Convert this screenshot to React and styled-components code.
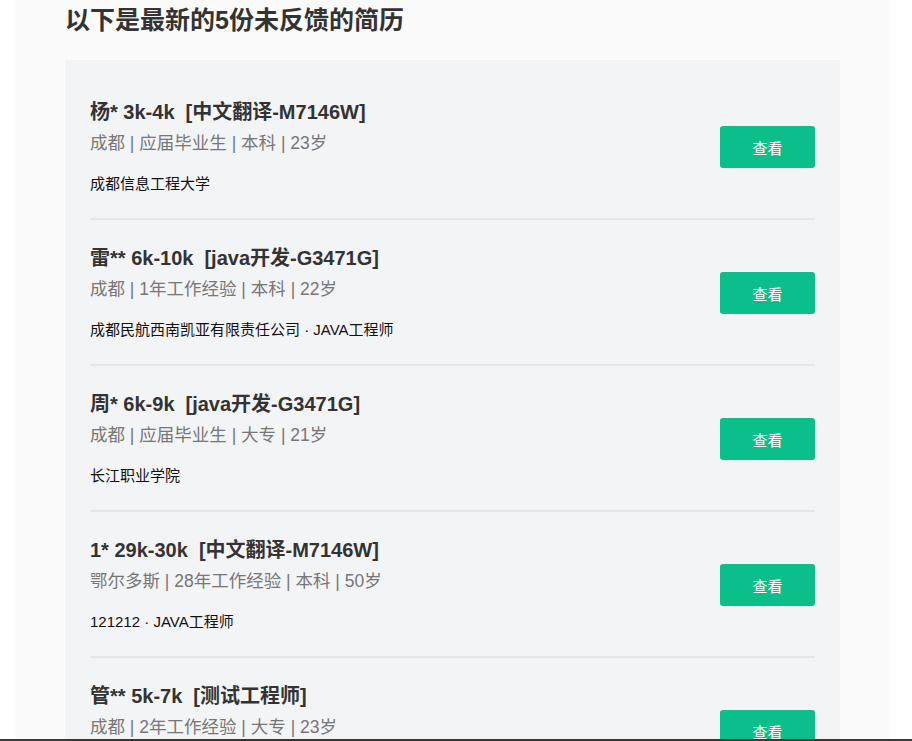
import React from "react";
import styled, { createGlobalStyle } from "styled-components";

const GlobalStyle = createGlobalStyle`
  html, body {
    margin: 0;
    padding: 0;
    background: #fff;
    font-family: "Liberation Sans", Arial, "Noto Sans CJK SC", sans-serif;
  }
`;

const Page = styled.div`
  margin: 0 22px 0 15px;
  padding: 0 50px 40px;
  background: #fbfbfb;
  min-height: 100vh;
`;

const Title = styled.h2`
  margin: 0;
  padding-top: 4px;
  height: 56px;
  line-height: 32px;
  font-size: 25px;
  font-weight: bold;
  color: #333;
`;

const Panel = styled.ul`
  list-style: none;
  margin: 0;
  padding: 14px 25px 0;
  background: #f3f4f6;
`;

const Row = styled.li`
  display: flex;
  align-items: center;
  justify-content: space-between;
  padding: 26px 0 24px;
  border-bottom: 2px solid #e5e6e8;
`;

const Info = styled.div`
  display: flex;
  flex-direction: column;
`;

const Name = styled.div`
  font-size: 20px;
  line-height: 24px;
  font-weight: bold;
  color: #333;
`;

const Job = styled.span`
  margin-left: 11px;
`;

const Meta = styled.div`
  margin-top: 7px;
  font-size: 17.5px;
  line-height: 24px;
  color: #777;
`;

const Detail = styled.div`
  margin-top: 19px;
  font-size: 15px;
  line-height: 20px;
  color: #111;
`;

const ViewButton = styled.button`
  width: 95px;
  height: 42px;
  border: none;
  border-radius: 3px;
  background: #0bbf8a;
  color: #fff;
  font-family: inherit;
  font-size: 15px;
  cursor: pointer;
`;

const BottomBar = styled.div`
  position: fixed;
  left: 0;
  right: 0;
  bottom: 0;
  height: 2px;
  background: #383838;
`;

const resumes = [
  {
    name: "杨*",
    salary: "3k-4k",
    job: "中文翻译-M7146W",
    meta: "成都 | 应届毕业生 | 本科 | 23岁",
    detail: "成都信息工程大学",
  },
  {
    name: "雷**",
    salary: "6k-10k",
    job: "java开发-G3471G",
    meta: "成都 | 1年工作经验 | 本科 | 22岁",
    detail: "成都民航西南凯亚有限责任公司 · JAVA工程师",
  },
  {
    name: "周*",
    salary: "6k-9k",
    job: "java开发-G3471G",
    meta: "成都 | 应届毕业生 | 大专 | 21岁",
    detail: "长江职业学院",
  },
  {
    name: "1*",
    salary: "29k-30k",
    job: "中文翻译-M7146W",
    meta: "鄂尔多斯 | 28年工作经验 | 本科 | 50岁",
    detail: "121212 · JAVA工程师",
  },
  {
    name: "管**",
    salary: "5k-7k",
    job: "测试工程师",
    meta: "成都 | 2年工作经验 | 大专 | 23岁",
    detail: "四川大学",
  },
];

export default function App() {
  return (
    <>
      <GlobalStyle />
      <Page>
        <Title>以下是最新的5份未反馈的简历</Title>
        <Panel>
          {resumes.map((r) => (
            <Row key={r.name + r.salary}>
              <Info>
                <Name>
                  {r.name} {r.salary}
                  <Job>[{r.job}]</Job>
                </Name>
                <Meta>{r.meta}</Meta>
                <Detail>{r.detail}</Detail>
              </Info>
              <ViewButton>查看</ViewButton>
            </Row>
          ))}
        </Panel>
      </Page>
      <BottomBar />
    </>
  );
}
